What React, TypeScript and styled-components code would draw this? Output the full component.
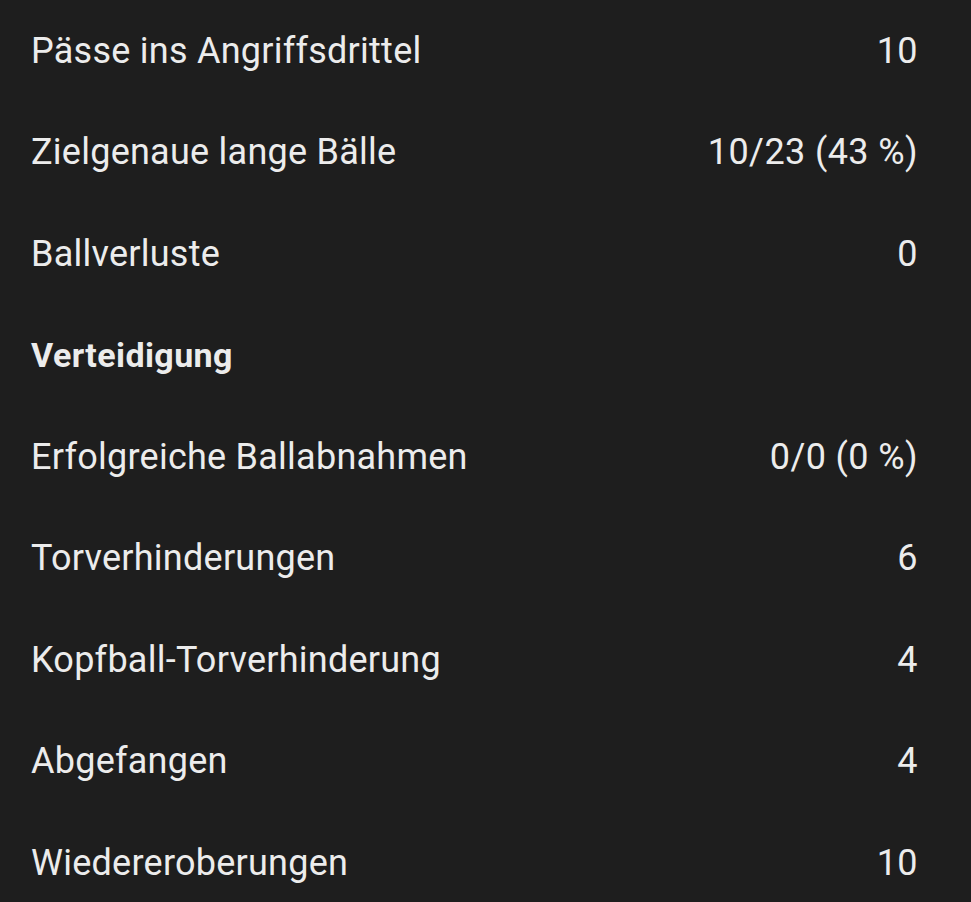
import styled, { createGlobalStyle } from 'styled-components';

const GlobalStyle = createGlobalStyle`
    html, body {
        margin: 0;
        padding: 0;
        background: #1e1e1e;
    }
    body {
        font-family: Roboto, "Noto Sans", sans-serif;
        color: #ececec;
    }
`;

type Item = { label: string; value?: string; heading?: boolean };

const items: Item[] = [
    { label: 'Pässe ins Angriffsdrittel', value: '10' },
    { label: 'Zielgenaue lange Bälle', value: '10/23 (43 %)' },
    { label: 'Ballverluste', value: '0' },
    { label: 'Verteidigung', heading: true },
    { label: 'Erfolgreiche Ballabnahmen', value: '0/0 (0 %)' },
    { label: 'Torverhinderungen', value: '6' },
    { label: 'Kopfball-Torverhinderung', value: '4' },
    { label: 'Abgefangen', value: '4' },
    { label: 'Wiedereroberungen', value: '10' },
];

export default function App() {
    return (
        <>
            <GlobalStyle />
            <StatList>
                {items.map((item, idx) => (
                    <StatRow key={idx}>
                        <Label $heading={item.heading}>{item.label}</Label>
                        {item.value && <Value>{item.value}</Value>}
                    </StatRow>
                ))}
            </StatList>
        </>
    );
}

const StatList = styled.div`
    display: flex;
    flex-direction: column;
    width: 971px;
    height: 902px;
    overflow: hidden;
    background: #1e1e1e;
`;

const StatRow = styled.div`
    display: flex;
    align-items: center;
    justify-content: space-between;
    flex: 0 0 101.5px;
    padding: 0 53px 0 31px;
`;

const Label = styled.span<{ $heading?: boolean }>`
    font-size: ${(p) => (p.$heading ? '34px' : '36px')};
    font-weight: ${(p) => (p.$heading ? 700 : 400)};
    letter-spacing: ${(p) => (p.$heading ? '0.4px' : '0.25px')};
    white-space: nowrap;
`;

const Value = styled.span`
    font-size: 36px;
    letter-spacing: 0.4px;
    white-space: nowrap;
`;
